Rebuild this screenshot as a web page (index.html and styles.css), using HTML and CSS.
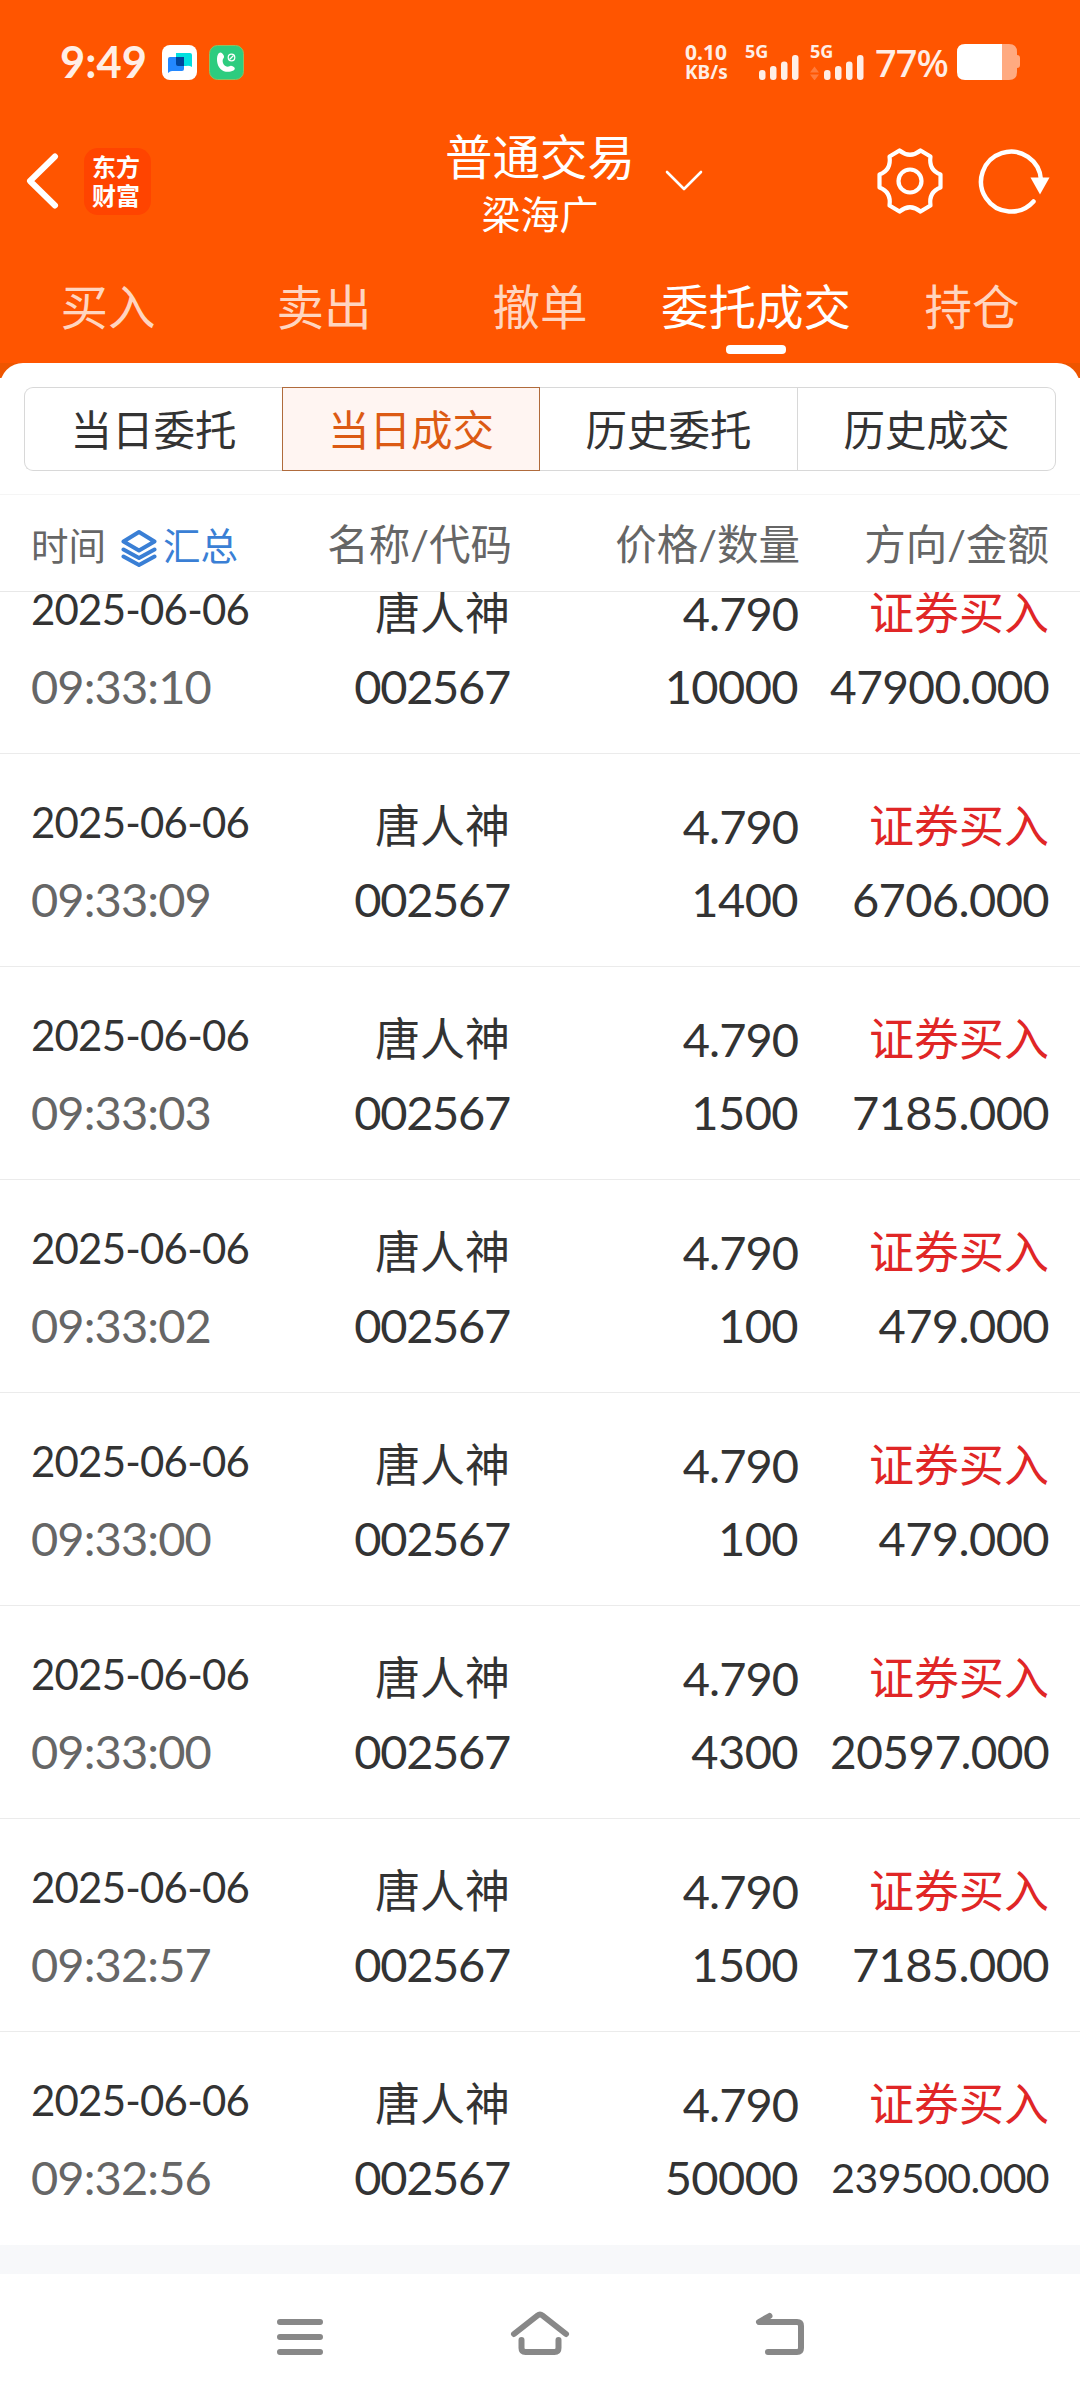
FILE: index.html
```html
<!DOCTYPE html>
<html lang="zh-CN">
<head>
    <meta charset="UTF-8">
    <meta name="viewport" content="width=device-width, initial-scale=1.0">
    <title>普通交易</title>
    <link rel="stylesheet" href="styles.css">
</head>
<body>

    <header class="header">
        <div class="status">
            <span class="clock">9:49</span>
            <svg class="app-icon" width="35" height="35" viewBox="0 0 35 35">
                <rect width="35" height="35" rx="8" fill="#fff"/>
                <path d="M14 8h14q2 0 2 2v12q-3-2-6-1H14z" fill="#00dfe0"/>
                <path d="M8 12h14v12q0 2-2 2H10q-2 0-4 2V14q0-2 2-2z" fill="#2388ff"/>
                <path d="M14 12h8v9h-6q-2 0-2-2z" fill="#00459c"/>
            </svg>
            <svg class="app-icon" width="35" height="35" viewBox="0 0 35 35">
                <rect x=".5" y=".5" width="34" height="34" rx="8" fill="#2dcc7f" stroke="#8fbf60"/>
                <path d="M9.500 8.500C7 12 7.500 20 11.500 24c3.500 3.500 9 3.500 13 1.500 2-1.200 1.500-2.800 0-3.700-1.800-1.200-3-1.500-4.500-.3-4 1-7.500-3.500-6-7.500 1.300-1.200 1.300-2.500.5-4-1.500-2.500-3-3.500-5-1.500z" fill="#fff"/>
                <circle cx="22.500" cy="12.500" r="3.300" fill="none" stroke="#fff" stroke-width="1.200"/>
                <path d="M20.500 14.500l4-4" stroke="#fff" stroke-width="1.200"/>
            </svg>
            <div class="speed"><span>0.10</span><span class="unit">KB/s</span></div>
            <div class="signal">
                <span class="net">5G</span>
                <svg width="54" height="36" viewBox="0 0 54 36" fill="#ffeee6">
                    <rect x="14" y="26" width="6.500" height="10" rx="3"/>
                    <rect x="25" y="22" width="6.500" height="14" rx="3"/>
                    <rect x="36" y="17.500" width="6.500" height="18.500" rx="3"/>
                    <rect x="47" y="11" width="6.500" height="25" rx="3"/>
                </svg>
            </div>
            <div class="signal">
                <span class="net">5G</span>
                <svg width="54" height="36" viewBox="0 0 54 36" fill="#ffeee6">
                    <path d="M0 28.500h9l-4.500-6zM0 30.500h9l-4.500 6z" fill="#ff7c3c"/>
                    <rect x="14" y="26" width="6.500" height="10" rx="3"/>
                    <rect x="25" y="22" width="6.500" height="14" rx="3"/>
                    <rect x="36" y="17.500" width="6.500" height="18.500" rx="3"/>
                    <rect x="47" y="11" width="6.500" height="25" rx="3"/>
                </svg>
            </div>
            <span class="percent">77%</span>
            <svg class="battery" width="63" height="36" viewBox="0 0 63 36">
                <path d="M45 0h7q8 0 8 8v3q3 0 3 3v7q0 3-3 3v4q0 8-8 8h-7z" fill="#ffaa80"/>
                <path d="M8 0h37v36H8q-8 0-8-8V8q0-8 8-8z" fill="#fff"/>
            </svg>
        </div>

        <div class="title-bar">
            <div class="side">
                <svg width="33" height="56" viewBox="0 0 33 56">
                    <path d="M29 3.500L4 28l25 24.500" fill="none" stroke="#fff" stroke-width="6" stroke-linecap="round" stroke-linejoin="round"/>
                </svg>
                <div class="logo"><span>东方</span><span>财富</span></div>
            </div>
            <div class="title">
                <h1>普通交易</h1>
                <p>梁海广</p>
            </div>
            <svg class="arrow" width="38" height="22" viewBox="0 0 38 22">
                <path d="M2 2l17 17L36 2" fill="none" stroke="#fff" stroke-width="2.600" stroke-linecap="round" stroke-linejoin="round"/>
            </svg>
            <div class="side side-right">
                <svg width="68" height="68" viewBox="-34 -34 68 68" fill="none" stroke="#fff" stroke-width="4.200" stroke-linejoin="round">
                    <path d="M-10.500-30.500Q0-22 10.500-30.500L20.500-24.500Q18.500-11 30.500-6.500V6.500Q18.500 11 20.500 24.500L10.500 30.500Q0 22-10.500 30.500L-20.500 24.500Q-18.500 11-30.500 6.500V-6.500Q-18.500-11-20.500-24.500Z"/>
                    <circle r="11.500"/>
                </svg>
                <svg width="74" height="68" viewBox="0 0 74 68">
                    <path d="M55.500 54.500A30 30 0 1 1 63 33" fill="none" stroke="#fff" stroke-width="4.500" stroke-linecap="round"/>
                    <path d="M52.500 30.500h19l-9.500 17z" fill="#fff"/>
                </svg>
            </div>
        </div>

        <nav class="tabs">
            <a>买入</a>
            <a>卖出</a>
            <a>撤单</a>
            <a class="active">委托成交</a>
            <a>持仓</a>
        </nav>
    </header>

    <div class="panel-wrap">
        <div class="panel-top"></div>
    </div>

    <main class="panel">
        <div class="segments">
            <div class="segment">当日委托</div>
            <div class="segment selected">当日成交</div>
            <div class="segment">历史委托</div>
            <div class="segment">历史成交</div>
        </div>

        <div class="list-head">
            <div class="head-time">
                <span>时间</span>
                <svg width="36" height="38" viewBox="0 0 36 38" fill="none" stroke="#3a7fd5" stroke-width="4" stroke-linecap="round" stroke-linejoin="round">
                    <path d="M18 3L33.500 12.500 18 21.500 2.500 12.500z"/>
                    <path d="M2.500 20.500L18 29l15.500-8.500M2.500 27.500L18 36l15.500-8.500"/>
                </svg>
                <span class="sum">汇总</span>
            </div>
            <div>名称/代码</div>
            <div>价格/数量</div>
            <div>方向/金额</div>
        </div>

        <div class="list">
            <div class="row">
                <div class="cell time"><span>2025-06-06</span><span>09:33:10</span></div>
                <div class="cell code"><span>唐人神</span><span>002567</span></div>
                <div class="cell price"><span>4.790</span><span>10000</span></div>
                <div class="cell amount"><span>证券买入</span><span class="long">47900.000</span></div>
            </div>
            <div class="row">
                <div class="cell time"><span>2025-06-06</span><span>09:33:09</span></div>
                <div class="cell code"><span>唐人神</span><span>002567</span></div>
                <div class="cell price"><span>4.790</span><span>1400</span></div>
                <div class="cell amount"><span>证券买入</span><span>6706.000</span></div>
            </div>
            <div class="row">
                <div class="cell time"><span>2025-06-06</span><span>09:33:03</span></div>
                <div class="cell code"><span>唐人神</span><span>002567</span></div>
                <div class="cell price"><span>4.790</span><span>1500</span></div>
                <div class="cell amount"><span>证券买入</span><span>7185.000</span></div>
            </div>
            <div class="row">
                <div class="cell time"><span>2025-06-06</span><span>09:33:02</span></div>
                <div class="cell code"><span>唐人神</span><span>002567</span></div>
                <div class="cell price"><span>4.790</span><span>100</span></div>
                <div class="cell amount"><span>证券买入</span><span>479.000</span></div>
            </div>
            <div class="row">
                <div class="cell time"><span>2025-06-06</span><span>09:33:00</span></div>
                <div class="cell code"><span>唐人神</span><span>002567</span></div>
                <div class="cell price"><span>4.790</span><span>100</span></div>
                <div class="cell amount"><span>证券买入</span><span>479.000</span></div>
            </div>
            <div class="row">
                <div class="cell time"><span>2025-06-06</span><span>09:33:00</span></div>
                <div class="cell code"><span>唐人神</span><span>002567</span></div>
                <div class="cell price"><span>4.790</span><span>4300</span></div>
                <div class="cell amount"><span>证券买入</span><span class="long">20597.000</span></div>
            </div>
            <div class="row">
                <div class="cell time"><span>2025-06-06</span><span>09:32:57</span></div>
                <div class="cell code"><span>唐人神</span><span>002567</span></div>
                <div class="cell price"><span>4.790</span><span>1500</span></div>
                <div class="cell amount"><span>证券买入</span><span>7185.000</span></div>
            </div>
            <div class="row">
                <div class="cell time"><span>2025-06-06</span><span>09:32:56</span></div>
                <div class="cell code"><span>唐人神</span><span>002567</span></div>
                <div class="cell price"><span>4.790</span><span>50000</span></div>
                <div class="cell amount"><span>证券买入</span><span class="longer">239500.000</span></div>
            </div>
        </div>
    </main>

    <footer class="nav">
        <svg width="60" height="48" viewBox="0 0 60 48">
            <path d="M10 13h40M10 28h40M10 43h40"/>
        </svg>
        <svg width="60" height="48" viewBox="0 0 60 48">
            <path d="M4 25L27.500 6.500q2.500-2 5 0L56 25M11.500 31v8q0 4 4 4h29q4 0 4-4v-8"/>
        </svg>
        <svg width="60" height="48" viewBox="0 0 60 48">
            <path d="M19.500 7L9 13h38q4 0 4 4v22q0 4-4 4H18"/>
        </svg>
    </footer>

</body>
</html>
```

FILE: styles.css
```css
* {
    box-sizing: border-box;
}
body {
    margin: 0;
    width: 1080px;
    height: 2400px;
    overflow: hidden;
    background-color: #fff;
    color: #333;
    font-family: Lato, "Noto Sans CJK SC", sans-serif;
}
svg {
    display: block;
    flex: none;
}

/* header */
.header {
    height: 363px;
    background-color: #ff5500;
    color: #fff;
}
.status {
    display: flex;
    align-items: center;
    height: 124px;
    padding-left: 60px;
    color: #ffeee6;
}
.clock {
    width: 102px;
    padding-bottom: 2px;
    font-size: 43.500px;
    font-weight: bold;
    line-height: 50px;
}
.app-icon {
    margin-right: 12px;
}
.speed {
    display: flex;
    flex-direction: column;
    width: 60px;
    margin-left: 429px;
    font-family: "Noto Sans", sans-serif;
    font-size: 21px;
    font-weight: bold;
    line-height: 20px;
}
.speed .unit {
    font-size: 19px;
}
.signal {
    position: relative;
    margin-right: 11px;
}
.net {
    position: absolute;
    left: 0;
    top: 0;
    font-family: "Noto Sans", sans-serif;
    font-size: 18px;
    font-weight: bold;
    line-height: 15px;
}
.percent {
    width: 82px;
    font-family: "Noto Sans", sans-serif;
    font-size: 38px;
    font-weight: 500;
    line-height: 40px;
    letter-spacing: -1px;
}
.title-bar {
    display: flex;
    align-items: center;
    height: 114px;
    padding: 0 28px 0 26px;
}
.side {
    display: flex;
    align-items: center;
    gap: 25px;
    width: 414px;
}
.logo {
    display: flex;
    flex-direction: column;
    align-items: center;
    justify-content: center;
    width: 67px;
    height: 67px;
    padding: 0 3px 1px 0;
    border-radius: 14px;
    background-color: #ff4400;
    font-size: 24px;
    font-weight: bold;
    line-height: 29px;
}
.title {
    width: 200px;
    padding-top: 6px;
    text-align: center;
    white-space: nowrap;
}
.title h1 {
    margin: 0;
    font-size: 47.500px;
    font-weight: normal;
    line-height: 60px;
}
.title p {
    margin: 0;
    font-size: 39px;
    line-height: 54px;
}
.arrow {
    margin-left: 25px;
}
.side-right {
    flex: 1;
    gap: 34px;
    justify-content: flex-end;
}
.tabs {
    display: flex;
    height: 125px;
}
.tabs a {
    display: flex;
    flex-direction: column;
    align-items: center;
    width: 216px;
    padding-top: 39px;
    font-size: 47.500px;
    line-height: 60px;
    color: #ffd5c0;
}
.tabs .active {
    color: #fff;
}
.tabs .active::after {
    content: "";
    width: 60px;
    height: 9px;
    margin-top: 8px;
    border-radius: 4px;
    background-color: #fff;
}

/* panel */
.panel-wrap {
    height: 15px;
    background-color: #ee5500;
    overflow: hidden;
}
.panel-top {
    height: 40px;
    border-radius: 23px 23px 0 0;
    background-color: #fff;
}
.panel {
    height: 1896px;
    background-color: #f7f8fa;
}
.segments {
    display: flex;
    height: 117px;
    padding: 9px 24px 23px;
    border-bottom: 1px solid #f5f5f5;
    background-color: #fff;
}
.segment {
    width: 258px;
    border: 1px solid #d8d8d8;
    border-left-width: 0;
    text-align: center;
    font-size: 41.500px;
    line-height: 84px;
}
.segment:first-child {
    border-left-width: 1px;
    border-right-width: 0;
    border-radius: 9px 0 0 9px;
}
.segment:last-child {
    border-radius: 0 9px 9px 0;
}
.segment.selected {
    border: 1px solid #b06b3c;
    background-color: #fff5f2;
    color: #dc5a14;
}
.list-head, .row {
    display: grid;
    grid-template-columns: 220px 259px 288px 251px;
    padding-left: 31px;
    text-align: right;
    background-color: #fff;
}
.list-head {
    height: 97px;
    border-bottom: 1px solid #e8e8e8;
    font-size: 41.500px;
    line-height: 98px;
    color: #666;
}
.list-head > div {
    margin-right: -2px;
}
.list-head > div:last-child {
    margin-right: 0;
}
.list-head .head-time {
    display: flex;
    align-items: center;
    font-size: 37.500px;
    line-height: 102px;
}
.head-time svg {
    margin: 3px 6px 0 15px;
}
.sum {
    color: #3a7fd5;
}

/* list, scrolled so the first row is partly under the head */
.list {
    height: 1653px;
    overflow: hidden;
}
.row {
    height: 213px;
    border-bottom: 1px solid #ebebeb;
}
.row:first-child {
    margin-top: -51px;
}
.row:last-child {
    border-bottom: none;
}
.cell {
    display: flex;
    flex-direction: column;
    padding-top: 36px;
    font-size: 47px;
    line-height: 73px;
    white-space: nowrap;
}
.cell span:last-child {
    letter-spacing: -0.600px;
}
.time {
    padding-top: 37px;
    text-align: left;
}
.time span:first-child {
    margin-bottom: 9px;
    font-size: 42px;
    line-height: 63px;
    letter-spacing: -0.800px;
}
.time span:last-child {
    color: #666;
    letter-spacing: -0.900px;
}
.code span:first-child, .amount span:first-child {
    font-size: 45px;
}
.code span:last-child {
    letter-spacing: -1.300px;
}
.price span:first-child {
    letter-spacing: -1px;
}
.amount span:first-child {
    color: #e02626;
}
.amount .long {
    font-size: 46px;
    letter-spacing: -1.200px;
}
.amount .longer {
    font-size: 41px;
    letter-spacing: -0.200px;
}

/* system navigation */
.nav {
    display: flex;
    justify-content: center;
    gap: 180px;
    height: 126px;
    padding-top: 35px;
    background-color: #fff;
}
.nav path {
    fill: none;
    stroke: #888;
    stroke-width: 6;
    stroke-linecap: round;
    stroke-linejoin: round;
}
```
